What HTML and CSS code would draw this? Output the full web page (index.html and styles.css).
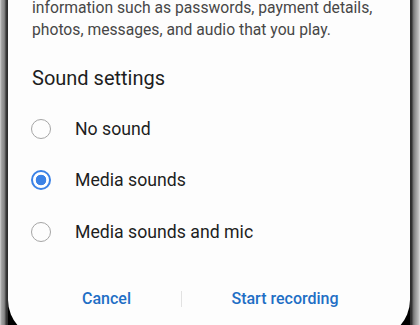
FILE: index.html
```html
<!DOCTYPE html>
<html>
<head>
<meta charset="utf-8">
<link rel="stylesheet" href="styles.css">
</head>
<body>
<div class="phone">
  <div class="bezel bezel-left"></div>
  <div class="screen-wrap">
    <div class="screen">
      <p class="desc">information such as passwords, payment details, photos, messages, and audio that you play.</p>
      <h2 class="title">Sound settings</h2>
      <div class="options">
        <div class="option"><span class="radio"></span><span class="label">No sound</span></div>
        <div class="option"><span class="radio checked"></span><span class="label">Media sounds</span></div>
        <div class="option"><span class="radio"></span><span class="label">Media sounds and mic</span></div>
      </div>
      <div class="actions">
        <div class="btn btn-left">Cancel</div>
        <div class="divider"></div>
        <div class="btn btn-right">Start recording</div>
      </div>
    </div>
  </div>
  <div class="bezel bezel-right"></div>
</div>
</body>
</html>
```

FILE: styles.css
```css
html, body {
  margin: 0;
  padding: 0;
  width: 420px;
  height: 325px;
  overflow: hidden;
  background: #fff;
}
.phone {
  display: flex;
  height: 325px;
  font-family: Roboto, "Noto Sans", sans-serif;
}
.bezel {
  flex: none;
  height: 100%;
}
.bezel-left {
  width: 8px;
  background: linear-gradient(to right, #d8d8d8 0, #b0b0b0 1px, #9c9c9c 2px, #8a8a8a 4px, #707070 5px, #3a3a3a 6px, #2a2a2a 8px);
}
.bezel-right {
  width: 10px;
  background: linear-gradient(to right, #2a2a2a 0, #333 2px, #6c6c6c 3px, #909090 5px, #a8a8a8 7px, #c4c4c4 9px, #e0e0e0 10px);
}
.screen-wrap {
  flex: 1;
  background: #000;
  height: 100%;
  overflow: hidden;
}
.screen {
  background: #fdfdfd;
  height: 341px;
  border-radius: 0 0 38px 38px;
  padding: 0 20px 0 24px;
  box-sizing: border-box;
}
.desc {
  margin: -3px 0 0 0;
  font-size: 15.7px;
  line-height: 22px;
  color: #474747;
}
.title {
  margin: 24px 0 0 0;
  font-size: 20px;
  line-height: 26px;
  font-weight: 400;
  color: #1e1e1e;
}
.options {
  margin-top: 12px;
  display: flex;
  flex-direction: column;
}
.option {
  display: flex;
  align-items: center;
  height: 51.5px;
}
.radio {
  box-sizing: border-box;
  width: 20px;
  height: 20px;
  border-radius: 50%;
  border: 1.5px solid #a5a5a5;
  margin-left: -1px;
  margin-right: 24px;
  flex: none;
}
.radio.checked {
  border: 2px solid #3b82e6;
  background: radial-gradient(circle, #3b82e6 0, #3b82e6 5px, #fff 5.6px);
}
.label {
  font-size: 17.7px;
  color: #1e1e1e;
}
.actions {
  margin-top: 21px;
  display: flex;
  align-items: center;
  height: 40px;
}
.btn {
  font-size: 16px;
  font-weight: 500;
  color: #1f6fc5;
  text-align: center;
}
.btn-left {
  width: 149px;
}
.divider {
  width: 1px;
  height: 16px;
  background: #e2e2e2;
  flex: none;
}
.btn-right {
  flex: 1;
  padding-right: 2px;
}
```
